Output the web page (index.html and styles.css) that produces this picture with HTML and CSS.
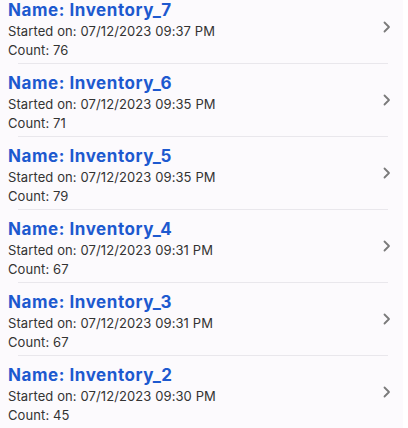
FILE: index.html
```html
<!DOCTYPE html>
<html lang="en">
<head>
<meta charset="utf-8">
<title>Inventories</title>
<link rel="stylesheet" href="styles.css">
</head>
<body>
<div class="screen">
  <ul class="list">
    <li class="row">
      <div class="info">
        <div class="name">Name: Inventory_7</div>
        <div class="meta">Started on: 07/12/2023 09:37 PM</div>
        <div class="meta count">Count: 76</div>
      </div>
      <svg class="chev" viewBox="0 0 8 12" width="8" height="12"><path d="M1.5 1.5 L6 6 L1.5 10.5" /></svg>
    </li>
    <li class="row">
      <div class="info">
        <div class="name">Name: Inventory_6</div>
        <div class="meta">Started on: 07/12/2023 09:35 PM</div>
        <div class="meta count">Count: 71</div>
      </div>
      <svg class="chev" viewBox="0 0 8 12" width="8" height="12"><path d="M1.5 1.5 L6 6 L1.5 10.5" /></svg>
    </li>
    <li class="row">
      <div class="info">
        <div class="name">Name: Inventory_5</div>
        <div class="meta">Started on: 07/12/2023 09:35 PM</div>
        <div class="meta count">Count: 79</div>
      </div>
      <svg class="chev" viewBox="0 0 8 12" width="8" height="12"><path d="M1.5 1.5 L6 6 L1.5 10.5" /></svg>
    </li>
    <li class="row">
      <div class="info">
        <div class="name">Name: Inventory_4</div>
        <div class="meta">Started on: 07/12/2023 09:31 PM</div>
        <div class="meta count">Count: 67</div>
      </div>
      <svg class="chev" viewBox="0 0 8 12" width="8" height="12"><path d="M1.5 1.5 L6 6 L1.5 10.5" /></svg>
    </li>
    <li class="row">
      <div class="info">
        <div class="name">Name: Inventory_3</div>
        <div class="meta">Started on: 07/12/2023 09:31 PM</div>
        <div class="meta count">Count: 67</div>
      </div>
      <svg class="chev" viewBox="0 0 8 12" width="8" height="12"><path d="M1.5 1.5 L6 6 L1.5 10.5" /></svg>
    </li>
    <li class="row">
      <div class="info">
        <div class="name">Name: Inventory_2</div>
        <div class="meta">Started on: 07/12/2023 09:30 PM</div>
        <div class="meta count">Count: 45</div>
      </div>
      <svg class="chev" viewBox="0 0 8 12" width="8" height="12"><path d="M1.5 1.5 L6 6 L1.5 10.5" /></svg>
    </li>
  </ul>
</div>
</body>
</html>
```
FILE: styles.css
```css
html, body {
  margin: 0;
  padding: 0;
  background: #ffffff;
  height: 100%;
  overflow: hidden;
}
.screen {
  width: 403px;
  height: 100%;
  background: #fcfafd;
  overflow: hidden;
}
.list {
  list-style: none;
  margin: -9px 0 0 0;
  padding: 0;
}
.row {
  display: flex;
  align-items: flex-start;
  height: 72px;
  border-bottom: 1px solid #e9e7ec;
  margin: 0 15px 0 18px;
}
.info {
  flex: 1;
  margin-left: -10px;
  padding-top: 8px;
  display: flex;
  flex-direction: column;
}
.name {
  font-family: Inter, sans-serif;
  font-weight: 700;
  font-size: 17px;
  line-height: 22px;
  letter-spacing: 0.55px;
  color: #1d59cf;
}
.meta {
  font-family: Inter, sans-serif;
  font-size: 13px;
  line-height: 20px;
  letter-spacing: 0.1px;
  color: #333333;
}
.count {
  line-height: 18px;
}
.chev {
  align-self: center;
  fill: none;
  stroke: #7a7a7a;
  stroke-width: 1.8;
  stroke-linecap: round;
  stroke-linejoin: round;
  margin-right: -3px;
}
```
